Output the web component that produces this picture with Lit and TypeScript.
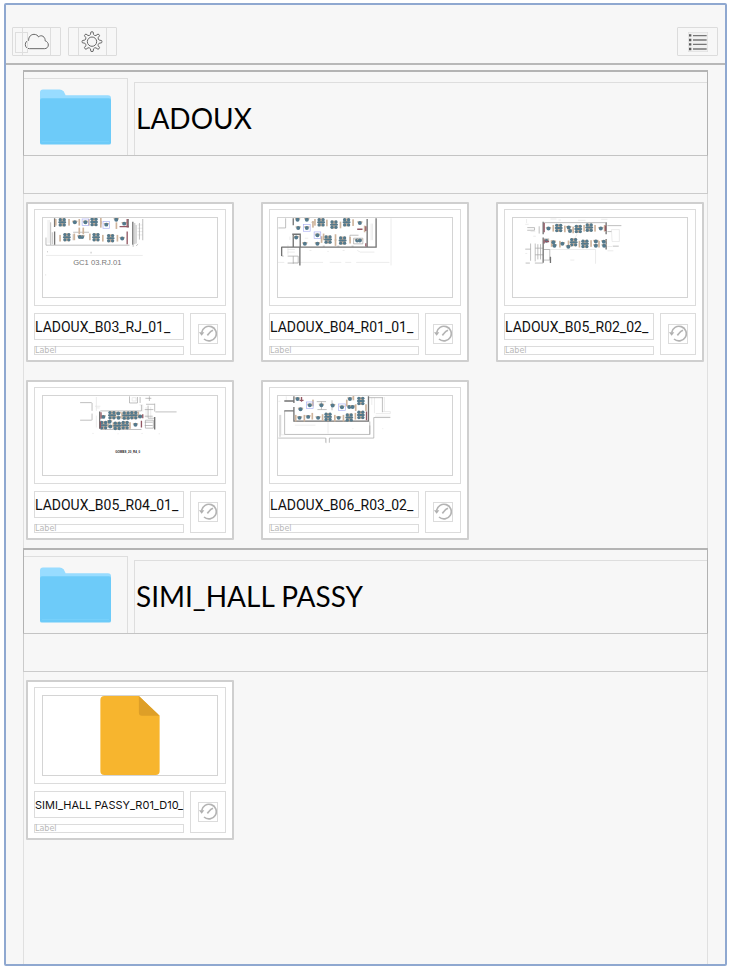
import { LitElement, html, svg, css, nothing } from "lit";
import { customElement, property } from "lit/decorators.js";

type Point = [number, number];

interface Plan {
  view: string;
  /** Blocks of four desks. */
  pods: Point[];
  /** Single desks. */
  seats: Point[];
  /** Tan partitions. */
  panels: Point[];
  /** Small blue outlined rooms. */
  rooms: Point[];
  walls: string;
  thin: string;
  faint: string;
  reds: string;
  caption?: { x: number; y: number; text: string; size: number; bold?: boolean };
}

interface Doc {
  name: string;
  plan?: Plan;
  small?: boolean;
}

interface Folder {
  title: string;
  docs: Doc[];
}

const folders: Folder[] = [
  {
    title: "LADOUX",
    docs: [
      {
        name: "LADOUX_B03_RJ_01_",
        plan: {
          view: "69 69 525 237",
          pods: [[127, 82], [223, 81], [141, 127], [229, 127], [273, 130]],
          seats: [[165, 82], [197, 82], [187, 126], [260, 89], [314, 86], [308, 131], [290, 74], [180, 126]],
          panels: [[107, 82], [147, 82], [178, 82], [207, 82], [243, 78], [120, 130], [163, 126], [210, 126], [249, 130], [293, 130], [178, 108], [190, 108], [290, 92], [243, 88]],
          rooms: [[197, 82], [260, 90]],
          walls: "M104 70V96M104 110V150M326 72V98M340 80V150",
          thin: "M78 151H330M346 84V148M92 82V150M78 151V128M97 112V148M160 112H208M350 90V146M360 84V134M370 72V136M341 150V156M350 153L356 148M81 171H84M214 171V176M160 118V136",
          faint: "M84 75V145M88 75V145M78 182H370M354 90H370M354 100H370M354 110H370M354 120H370M77 238V243",
          reds: "M323 72V98M323 110V148M300 95H328",
          caption: { x: 160, y: 211, text: "GC1 03.RJ.01", size: 23 },
        },
      },
      {
        name: "LADOUX_B04_R01_01_",
        plan: {
          view: "69 69 525 237",
          pods: [[199, 82], [238, 89], [276, 82], [220, 134], [264, 137]],
          seats: [[128, 74], [156, 74], [130, 99], [156, 99], [124, 128], [188, 121], [150, 147], [188, 147], [316, 84], [308, 137], [316, 137]],
          panels: [[180, 82], [216, 84], [257, 90], [295, 83], [200, 134], [242, 128], [242, 143], [286, 136], [330, 102], [206, 126], [174, 88]],
          rooms: [[156, 99], [188, 121]],
          walls: "M115 70V91M115 116V157H365V70M80 156V184M80 157H115M135 157V212M338 72V157M136 156V118H112",
          thin: "M70 99H92V70M286 138V121H312M297 130H325V147H297ZM98 184H130V205H98M115 184V207M80 184H86M170 82H178M204 154H210M248 154H254M291 154H297",
          faint: "M105 125V135M99 150V180M98 164H120M98 172H120M410 70V212M69 203H88M115 203H205M225 203H260M272 203H290M305 203H405M150 130H160M164 167H170M218 170H222M264 167H270M308 167L318 172H360M350 86V136M354 86V136",
          reds: "M308 103H324M334 94V108M334 145V155",
        },
      },
      {
        name: "LADOUX_B05_R02_02_",
        plan: {
          view: "69 69 525 237",
          pods: [[207, 99], [266, 102], [299, 98], [252, 142], [286, 147]],
          seats: [[176, 101], [237, 98], [241, 108], [334, 101], [170, 138], [191, 142], [194, 153], [218, 147], [236, 156], [319, 140], [319, 153], [343, 141], [344, 153]],
          panels: [[190, 100], [225, 102], [250, 105], [283, 100], [316, 100], [345, 100], [185, 146], [210, 148], [236, 147], [269, 148], [304, 146], [328, 148]],
          rooms: [],
          walls: "M160 80V118M160 128V204M182 186V205M350 82V118M350 132V164",
          thin: "M160 164H180V186M122 146V198M106 163H122M135 205H160M162 83H348M136 146V200M144 148V194M152 148V194M136 160H160M136 180H160M112 98H134V106H112M148 94V116M354 92H396M354 110H366M370 154H388M107 205H120M162 132H178M162 196H180V186",
          faint: "M162 164H318V207M366 104H390V140H368ZM182 72H200M206 75H214M265 76H288M335 73H354M106 88H116M110 72V84M122 110H136M130 124H138M354 155H368M354 168H372M255 132L262 118M242 196H254M106 176H112",
          reds: "M163 84V112M163 134V146M348 92V108M166 140H178",
        },
      },
      {
        name: "LADOUX_B05_R04_01_",
        plan: {
          view: "69 63 525 237",
          pods: [[277, 121], [320, 122], [343, 121], [252, 151], [293, 153], [317, 151]],
          seats: [[251, 126], [296, 116], [297, 129], [270, 141], [272, 155], [348, 150], [362, 125]],
          panels: [[287, 120], [307, 122], [332, 120], [356, 120], [265, 148], [281, 152], [305, 152], [331, 152]],
          rooms: [],
          walls: "M240 110V162M406 126V164",
          thin: "M406 86V110M242 108H366V90M217 84V108M217 116V136M386 92V130H404M181 83H216M181 136H216M380 88H406M376 104H402M376 124H400M408 111H472M378 136H402V160H378ZM330 64V84H354V66M362 66V84M378 70H396M390 64V78M376 142H400M376 152H400M242 164H366",
          faint: "M230 66V108M230 122V158M226 94H242M230 99H240M338 68H350V78H338ZM380 96V130M394 96V130M218 176H222M294 177H297M366 176H370M418 177H422M360 90H370V110",
          reds: "M244 112V132M242 140V160M366 138V158M370 118V130",
          caption: { x: 287, y: 234, text: "GOMBS_20_R4_0", size: 9, bold: true },
        },
      },
      {
        name: "LADOUX_B06_R03_02_",
        plan: {
          view: "69 63 525 237",
          pods: [[319, 78], [319, 120], [284, 128], [220, 126]],
          seats: [[128, 72], [137, 103], [165, 91], [200, 91], [234, 92], [262, 97], [286, 72], [284, 96], [294, 96], [134, 129], [160, 126], [190, 129], [252, 129]],
          panels: [[148, 130], [172, 124], [203, 128], [240, 130], [266, 130], [302, 124], [303, 98], [276, 84], [122, 130], [296, 66], [174, 84], [334, 98]],
          rooms: [[165, 91], [262, 97]],
          walls: "M117 64V84M117 96V139H342V64M88 78H118M88 108H116",
          thin: "M89 108V179H346V140M346 179V152M75 120V186M70 190H213V204M224 204V190H358V128H408M384 68V112M344 68H386M200 80V104M186 80H214M188 104H216M232 76V106",
          faint: "M70 79H76M78 120V180H89M352 68V90M360 68V115M364 116H408V110H384M390 66V110M120 151H182M220 140V176M295 163V160M385 163V160M215 190V206M94 64V78M362 124H408",
          reds: "M140 66V80M134 76H146M336 110V136",
        },
      },
    ],
  },
  {
    title: "SIMI_HALL PASSY",
    docs: [{ name: "SIMI_HALL PASSY_R01_D10_", small: true }],
  },
];

/** Outline of a toothed wheel centred on the origin. */
function gearPath(teeth: number, root: number, tip: number): string {
  const step = (Math.PI * 2) / teeth;
  const at = (r: number, a: number) => `${(r * Math.cos(a)).toFixed(2)} ${(r * Math.sin(a)).toFixed(2)}`;
  let d = "";
  for (let i = 0; i < teeth; i++) {
    const a = i * step;
    d += `${i ? "L" : "M"}${at(root, a - step * 0.27)}L${at(tip - 1, a - step * 0.15)}`;
    d += `Q${at(tip + 1, a)} ${at(tip - 1, a + step * 0.15)}L${at(root, a + step * 0.27)}`;
    d += `Q${at(root - 3, a + step * 0.5)} ${at(root, a + step * 0.73)}`;
  }
  return d + "Z";
}

@customElement("plan-drawing")
export class PlanDrawing extends LitElement {
  @property({ attribute: false }) plan!: Plan;

  static styles = css`
    :host { display: block; height: 100%; }
    .sheet { display: block; width: 100%; height: 100%; }
    .desk { fill: #54798c; }
    .top { fill: #cfb49c; }
    .room { fill: none; stroke: #a9aef2; stroke-width: 2; }
    .wall { fill: none; stroke: #737373; stroke-width: 4; }
    .thin { fill: none; stroke: #a0a0a0; stroke-width: 2; }
    .faint { fill: none; stroke: #e2e2e2; stroke-width: 2; }
    .red { fill: none; stroke: #935763; stroke-width: 4; }
    .caption { fill: #777; font-family: "Liberation Sans", sans-serif; }
    .bold { fill: #222; font-weight: 700; }
  `;

  render() {
    const p = this.plan;
    return html`<svg class="sheet" viewBox=${p.view} preserveAspectRatio="xMinYMin meet" aria-hidden="true">
      <path class="faint" d=${p.faint} />
      <path class="thin" d=${p.thin} />
      <path class="wall" d=${p.walls} />
      ${p.panels.map(([x, y]) => svg`<rect class="top" x=${x - 2} y=${y - 10} width="5" height="20" />`)}
      ${p.pods.map(
        ([x, y]) => svg`
          <rect class="top" x=${x - 9} y=${y - 12} width="18" height="24" />
          <ellipse class="desk" cx=${x - 6} cy=${y - 8} rx="5" ry="5" />
          <ellipse class="desk" cx=${x + 6} cy=${y - 8} rx="5" ry="5" />
          <rect class="desk" x=${x - 12} y=${y - 3} width="24" height="6" rx="3" />
          <ellipse class="desk" cx=${x - 6} cy=${y + 8} rx="5" ry="5" />
          <ellipse class="desk" cx=${x + 6} cy=${y + 8} rx="5" ry="5" />`
      )}
      ${p.seats.map(
        ([x, y]) => svg`
          <rect class="top" x=${x - 8} y=${y - 5} width="16" height="4" />
          <ellipse class="desk" cx=${x} cy=${y} rx="6" ry="6" />`
      )}
      ${p.rooms.map(([x, y]) => svg`<rect class="room" x=${x - 10} y=${y - 10} width="20" height="20" />`)}
      <path class="red" d=${p.reds} />
      ${p.caption
        ? svg`<text class=${p.caption.bold ? "caption bold" : "caption"} x=${p.caption.x} y=${p.caption.y}
            font-size=${p.caption.size}>${p.caption.text}</text>`
        : nothing}
    </svg>`;
  }
}

@customElement("doc-card")
export class DocCard extends LitElement {
  @property({ attribute: false }) doc!: Doc;

  static styles = css`
    :host { display: block; }
    * { box-sizing: border-box; }
    .card {
      display: flex;
      flex-direction: column;
      gap: 7px;
      height: 160px;
      padding: 5px 6px;
      background: #fff;
      border: 2px solid #cfcfcf;
      border-radius: 1px;
    }
    .preview { height: 97px; padding: 7px; border: 1px solid #dcdcdc; }
    .image { height: 81px; border: 1px solid #d4d4d4; overflow: hidden; }
    .file { display: block; width: 100%; height: 100%; }
    .info { display: flex; gap: 6px; height: 43px; }
    .texts { flex: 1; min-width: 0; display: flex; flex-direction: column; gap: 6px; }
    .name {
      height: 27px;
      margin: 0;
      border: 1px solid #dcdcdc;
      font-family: Roboto, "Liberation Sans", sans-serif;
      font-size: 14px;
      font-weight: 400;
      line-height: 26px;
      color: #111;
      white-space: nowrap;
    }
    .small { font-family: Inter, "Liberation Sans", sans-serif; font-size: 11px; }
    .label {
      height: 9px;
      margin: 0;
      border: 1px solid #dcdcdc;
      font-family: "DejaVu Sans", sans-serif;
      font-size: 8px;
      line-height: 8px;
      color: #b8b8b8;
    }
    .history {
      width: 36px;
      padding: 0;
      display: flex;
      align-items: center;
      justify-content: center;
      background: none;
      border: 1px solid #dcdcdc;
    }
    .clock { display: block; width: 20px; height: 20px; border: 1px solid #dcdcdc; }
  `;

  render() {
    const { name, plan, small } = this.doc;
    return html`<article class="card">
      <div class="preview">
        <div class="image">
          ${plan
            ? html`<plan-drawing .plan=${plan}></plan-drawing>`
            : html`<svg class="file" viewBox="0 0 60 80" aria-hidden="true">
                <path d="M4 0H39L60 20V76Q60 80 56 80H4Q0 80 0 76V4Q0 0 4 0Z" fill="#f7b52e" />
                <path d="M39 0L60 20H42Q39 20 39 17Z" fill="#de9f27" />
              </svg>`}
        </div>
      </div>
      <div class="info">
        <div class="texts">
          <h3 class=${small ? "name small" : "name"}>${name}</h3>
          <p class="label">Label</p>
        </div>
        <button class="history" type="button" aria-label="History">
          <svg class="clock" viewBox="538 389 54 54" aria-hidden="true">
            <g fill="none" stroke="#b4b4b4" stroke-width="5">
              <path d="M546 412A22 22 0 1 1 553 431" />
              <path d="M580 405Q573 408 569 413L563 420" />
            </g>
            <path d="M538 411H554L546 421Z" fill="#b0b0b0" />
          </svg>
        </button>
      </div>
    </article>`;
  }
}

@customElement("folder-section")
export class FolderSection extends LitElement {
  @property({ attribute: false }) folder!: Folder;

  static styles = css`
    :host { display: block; }
    * { box-sizing: border-box; }
    .head {
      height: 86px;
      display: flex;
      align-items: flex-end;
      gap: 6px;
      border: 1px solid #b2b2b2;
      border-top: 2px solid #b4b4b4;
      border-bottom-color: #c4c4c4;
    }
    .icon {
      width: 104px;
      height: 77px;
      padding: 10px 16px;
      border: 1px solid #dedede;
      border-left: 0;
      border-bottom: 0;
    }
    .folder { display: block; width: 100%; height: 56px; }
    .title {
      flex: 1;
      min-width: 0;
      height: 73px;
      margin: 0;
      padding-left: 1px;
      border: 1px solid #dedede;
      border-right: 0;
      border-bottom: 0;
      font-family: Lato, "Liberation Sans", sans-serif;
      font-size: 28px;
      font-weight: 400;
      line-height: 70px;
      color: #000;
      white-space: nowrap;
    }
    .spacer { height: 38px; border: 1px solid #cbcbcb; border-top: 0; }
    .grid {
      display: grid;
      grid-template-columns: repeat(auto-fill, 208px);
      gap: 18px 27px;
      padding: 8px 2px;
      border: solid #e0e0e0;
      border-width: 0 1px;
    }
  `;

  render() {
    return html`<section>
      <div class="head">
        <div class="icon">
          <svg class="folder" viewBox="0 0 72 56" aria-hidden="true">
            <path d="M0 12V3Q0 0 3 0H20Q22 0 24 2L26 6H69Q72 6 72 9V12Z" fill="#98dcff" />
            <path d="M0 11Q0 9 2 9H70Q72 9 72 11V54Q72 56 70 56H2Q0 56 0 54Z" fill="#6dcbf9" />
            <path d="M2 53H70" stroke="#78d0fb" />
          </svg>
        </div>
        <h2 class="title">${this.folder.title}</h2>
      </div>
      <div class="spacer"></div>
      <div class="grid">${this.folder.docs.map((d) => html`<doc-card .doc=${d}></doc-card>`)}</div>
    </section>`;
  }
}

@customElement("app-root")
export class AppRoot extends LitElement {
  static styles = css`
    :host {
      display: flex;
      min-height: 100vh;
      box-sizing: border-box;
      padding: 3px 3px 6px 4px;
      background: #fff;
    }
    * { box-sizing: border-box; }
    .frame {
      flex: 1;
      min-width: 0;
      display: flex;
      flex-direction: column;
      background: #f7f7f7;
      border: 2px solid #8fa8d0;
      border-radius: 2px;
    }
    .bar {
      display: flex;
      gap: 7px;
      padding: 22px 7px 7px 6px;
      border-bottom: 2px solid #b8b8b8;
    }
    .tool {
      position: relative;
      display: flex;
      justify-content: center;
      width: 49px;
      height: 29px;
      padding: 0;
      background: none;
      border: 1px solid #dcdcdc;
      border-radius: 1px;
    }
    .list { width: 41px; margin-left: auto; align-items: center; }
    .slot { width: 29px; height: 27px; border: solid #dedede; border-width: 0 1px; }
    .badge {
      position: absolute;
      left: 2px;
      top: 4px;
      width: 13px;
      height: 21px;
      border: 1px solid #dedede;
    }
    .glyph { display: block; width: 26px; height: 27px; }
    .lines { display: block; width: 20px; height: 20px; }
    .content {
      flex: 1;
      display: flex;
      flex-direction: column;
      margin: 5px 17px 0;
    }
    .rest { flex: 1; border: solid #e0e0e0; border-width: 0 1px; }
  `;

  render() {
    return html`<div class="frame">
      <header class="bar">
        <button class="tool" type="button" aria-label="Cloud">
          <span class="slot">
            <svg class="glyph" viewBox="71 84 78 81" aria-hidden="true">
              <path
                d="M90 146C82 146 78 140 78 134C78 127 82 122 88 121C87 111 95 103 104 103C111 103 116 107 118 111C121 107 127 106 131 109C136 112 138 118 137 122C143 124 147 129 147 135C147 141 142 146 136 146Z"
                fill="none" stroke="#6a6a6a" stroke-width="3" />
            </svg>
          </span>
          <span class="badge"></span>
        </button>
        <button class="tool" type="button" aria-label="Settings">
          <span class="slot">
            <svg class="glyph" viewBox="-39 -41 78 81" aria-hidden="true">
              <g fill="none" stroke="#6a6a6a" stroke-width="3" stroke-linejoin="round">
                <path d=${gearPath(8, 22, 30)} />
                <circle r="14" />
              </g>
            </svg>
          </span>
        </button>
        <button class="tool list" type="button" aria-label="List view">
          <svg class="lines" viewBox="263 95 60 60" aria-hidden="true">
            <rect x="264" y="96" width="58" height="58" fill="#f1f1f1" stroke="#dedede" stroke-width="2" />
            <path d="M266 105H273M266 119H273M266 132H273M266 146H273" stroke="#5c5c5c" stroke-width="7" />
            <path d="M278 106H319M278 119H319M278 132H319M278 146H319" stroke="#777" stroke-width="4" />
          </svg>
        </button>
      </header>
      <main class="content">
        ${folders.map((f) => html`<folder-section .folder=${f}></folder-section>`)}
        <div class="rest"></div>
      </main>
    </div>`;
  }
}
